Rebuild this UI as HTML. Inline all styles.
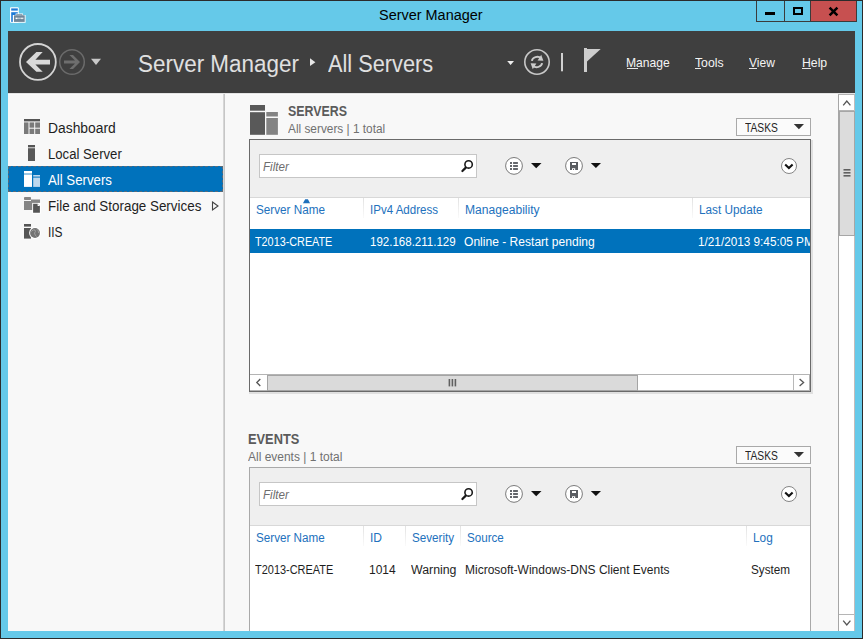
<!DOCTYPE html>
<html><head><meta charset="utf-8">
<style>
*{margin:0;padding:0;box-sizing:border-box}
html,body{width:863px;height:639px;overflow:hidden}
body{background:#65c9e9;font-family:"Liberation Sans",sans-serif;position:relative}
.a{position:absolute}
.t{position:absolute;white-space:nowrap;line-height:1;transform-origin:0 0}
svg{position:absolute;overflow:visible}
</style></head><body>
<!-- outer dark border -->
<div class="a" style="left:0;top:0;width:863px;height:639px;border:1px solid #2b2b2b"></div>

<!-- app icon -->
<svg style="left:0;top:0" width="40" height="30" viewBox="0 0 40 30">
  <rect x="10" y="7.2" width="8.8" height="15.6" rx="1" fill="#fff"/>
  <rect x="11.2" y="8.4" width="6.6" height="2.2" fill="#1e7ad6"/>
  <rect x="11.2" y="12.2" width="6.6" height="9.7" fill="#1e7ad6"/>
  <path d="M12.8,15 L15.6,15 L15.6,13.4 L23,13.4 L23,15 L25.6,15 L25.6,22.8 L12.8,22.8 Z" fill="#fff"/>
  <rect x="14" y="15.3" width="10.7" height="6.6" fill="#70879a"/>
  <path d="M16.2,15.6 L16.2,14.3 L22.4,14.3 L22.4,15.6 L21.3,15.6 L21.3,15.2 L17.3,15.2 L17.3,15.6 Z" fill="#70879a"/>
  <rect x="15.2" y="17.8" width="8.4" height="0.7" fill="#fff"/>
  <rect x="16" y="17.8" width="1.2" height="1.3" fill="#fff"/>
  <rect x="21.4" y="17.8" width="1.2" height="1.3" fill="#fff"/>
</svg>

<!-- window buttons -->
<div class="a" style="left:756px;top:1px;width:101px;height:21px;border:1px solid #3b3b3b;border-top:none"></div>
<div class="a" style="left:784px;top:1px;width:1px;height:20px;background:#3b3b3b"></div>
<div class="a" style="left:810px;top:1px;width:46px;height:20px;background:#c75050;border-left:1px solid #3b3b3b"></div>
<div class="a" style="left:765px;top:12px;width:10px;height:3px;background:#000"></div>
<div class="a" style="left:793px;top:7px;width:10px;height:8px;border:2px solid #000"></div>
<svg style="left:828px;top:7px" width="11" height="9" viewBox="0 0 11 9">
  <path d="M1.6 0.6 L9.4 8.4 M9.4 0.6 L1.6 8.4" stroke="#000" stroke-width="2.5"/>
</svg>

<!-- client -->
<div class="a" style="left:8px;top:31px;width:847px;height:600px;background:#f8f8f8"></div>

<!-- header -->
<div class="a" style="left:8px;top:31px;width:847px;height:62px;background:#3f3f3f"></div>
<svg style="left:0;top:0" width="110" height="93" viewBox="0 0 110 93">
  <circle cx="37.9" cy="61.9" r="17.9" fill="none" stroke="#d4d4d4" stroke-width="1.8"/>
  <path d="M26,62 L36.4,52 L42.7,52 L35.4,59.8 L50,59.8 L50,64.4 L35.4,64.4 L42.7,71.8 L36.4,71.8 Z" fill="#d9d9d9"/>
  <circle cx="72" cy="62" r="12.3" fill="none" stroke="#6b6b6b" stroke-width="1.5"/>
  <path d="M80,62 L73,55 L69.4,55 L75,60.6 L64,60.6 L64,63.4 L75,63.4 L69.4,69 L73,69 Z" fill="#6e6e6e"/>
  <path d="M91,58.8 L101,58.8 L96,65 Z" fill="#c8c8c8"/>
</svg>
<svg style="left:0;top:0" width="320" height="93" viewBox="0 0 320 93">
  <path d="M310,58.3 L315.4,62.2 L310,66.1 Z" fill="#e6e6e6"/>
</svg>
<svg style="left:0;top:0" width="610" height="93" viewBox="0 0 610 93">
  <path d="M507.2,61 L514,61 L510.6,65 Z" fill="#eeeeee"/>
  <circle cx="537" cy="62" r="12.2" fill="none" stroke="#c8c8c8" stroke-width="1.6"/>
  <path d="M531.9,60.8 A5.4,4.4 0 0 1 541.2,58.2" fill="none" stroke="#cbcbcb" stroke-width="1.9"/>
  <path d="M542.1,63.2 A5.4,4.4 0 0 1 532.8,65.8" fill="none" stroke="#cbcbcb" stroke-width="1.9"/>
  <path d="M541.2,54.8 L543.4,60.8 L537.6,60.4 Z" fill="#cbcbcb"/>
  <path d="M532.8,69.2 L530.6,63.2 L536.4,63.6 Z" fill="#cbcbcb"/>
  <rect x="561" y="53" width="2" height="18.3" fill="#d0d0d0"/>
  <rect x="584" y="48" width="3" height="24" fill="#cdcdcd"/>
  <path d="M587,49 L600.7,49 L587,61.5 Z" fill="#cdcdcd"/>
</svg>
<div class="a" style="left:627px;top:68px;width:11px;height:1px;background:#e8e8e8"></div>
<div class="a" style="left:695px;top:68px;width:6px;height:1px;background:#e8e8e8"></div>
<div class="a" style="left:749px;top:68px;width:8px;height:1px;background:#e8e8e8"></div>
<div class="a" style="left:802px;top:68px;width:9px;height:1px;background:#e8e8e8"></div>

<!-- light line under header -->
<div class="a" style="left:8px;top:93px;width:847px;height:1px;background:#e4e4e4"></div>
<div class="a" style="left:8px;top:94px;width:830px;height:1px;background:#fbfbfb"></div>

<!-- sidebar -->
<div class="a" style="left:223px;top:94px;width:1px;height:537px;background:#d6d6d6"></div>
<div class="a" style="left:224px;top:94px;width:1px;height:537px;background:#c6c6c6"></div>
<div class="a" style="left:8px;top:166px;width:215px;height:26px;background:#0072bc;border:1px dashed #5a6a78"></div>

<svg style="left:0;top:0" width="230" height="250" viewBox="0 0 230 250">
  <!-- dashboard -->
  <rect x="24" y="119" width="16" height="2.4" fill="#555"/>
  <rect x="24" y="122.4" width="4.5" height="11.6" fill="#7a7a7a"/>
  <rect x="29.5" y="122.4" width="4.7" height="5.3" fill="#7a7a7a"/>
  <rect x="35.2" y="122.4" width="4.8" height="5.3" fill="#7a7a7a"/>
  <rect x="29.5" y="128.7" width="4.7" height="5.3" fill="#7a7a7a"/>
  <rect x="35.2" y="128.7" width="4.8" height="5.3" fill="#7a7a7a"/>
  <!-- local server -->
  <rect x="28" y="145" width="7" height="2.4" fill="#555"/>
  <rect x="28" y="148.2" width="7" height="12.8" fill="#595959"/>
  <!-- all servers (selected) -->
  <rect x="24" y="171" width="8" height="2.6" fill="#fff"/>
  <rect x="24" y="174.4" width="8" height="12.5" fill="#fff"/>
  <rect x="33.2" y="175" width="6.8" height="1.6" fill="#bcd8ee"/>
  <rect x="33.2" y="177.6" width="6.8" height="9.3" fill="#bcd8ee"/>
  <!-- file and storage -->
  <rect x="24" y="197" width="7" height="3" rx="0.8" fill="#858585"/>
  <path d="M24,201 L31,201 L31,199.4 L40,199.4 L40,210 L24,210 Z" fill="#858585"/>
  <rect x="32.2" y="202.9" width="8.6" height="10.8" fill="#fff"/>
  <path d="M33.1,203.8 L37.6,203.8 L39.9,206.1 L39.9,212.8 L33.1,212.8 Z" fill="#555"/>
  <path d="M37.6,203.8 L39.9,206.1 L37.6,206.1 Z" fill="#fff"/>
  <!-- iis -->
  <rect x="24" y="224" width="7" height="2.6" fill="#555"/>
  <rect x="24" y="228" width="7" height="10.6" fill="#555"/>
  <circle cx="35" cy="233" r="5.9" fill="#fff"/>
  <circle cx="35" cy="233" r="4.9" fill="#737373"/>
  <path d="M31.5,231.5 Q33,229 35,230 Q36,232 34.5,233 Q35,235.5 36.5,236.5 M36.8,229.2 Q38.8,230.5 38.6,233" fill="none" stroke="#a0a0a0" stroke-width="1"/>
  <!-- expand triangle -->
  <path d="M212.5,202 L218,206 L212.5,210 Z" fill="none" stroke="#444" stroke-width="1.1"/>
</svg>

<!-- servers icon -->
<svg style="left:0;top:0" width="290" height="140" viewBox="0 0 290 140">
  <rect x="250" y="105" width="15" height="5.7" fill="#595959"/>
  <rect x="250" y="112.2" width="15" height="22.6" fill="#595959"/>
  <rect x="266.3" y="112" width="11.6" height="4.5" fill="#838383"/>
  <rect x="266.3" y="118" width="11.6" height="16.8" fill="#838383"/>
</svg>

<!-- TASKS buttons -->
<div class="a" style="left:736px;top:118px;width:75px;height:18px;border:1px solid #a9a9a9;background:#fbfbfb"></div>
<svg style="left:0;top:0" width="810" height="140" viewBox="0 0 810 140"><path d="M793.8,124 L804,124 L798.9,129.2 Z" fill="#333"/></svg>
<div class="a" style="left:736px;top:446px;width:75px;height:18px;border:1px solid #a9a9a9;background:#fbfbfb"></div>
<svg style="left:0;top:0" width="810" height="470" viewBox="0 0 810 470"><path d="M793.8,452 L804,452 L798.9,457.2 Z" fill="#333"/></svg>

<!-- SERVERS panel -->
<div class="a" style="left:249px;top:392px;width:564px;height:2px;background:#e0e0e0"></div>
<div class="a" style="left:811px;top:140px;width:2px;height:254px;background:#e0e0e0"></div>
<div class="a" style="left:249px;top:139px;width:562px;height:253px;border:1px solid #6a6a6a;background:#fff"></div>
<div class="a" style="left:250px;top:140px;width:560px;height:57px;background:#efefef"></div>
<div class="a" style="left:250px;top:197px;width:560px;height:1px;background:#d8d8d8"></div>
<div class="a" style="left:259px;top:154px;width:218px;height:24px;border:1px solid #c6c6c6;background:#fff"></div>
<svg style="left:0;top:0" width="810" height="200" viewBox="0 0 810 200">
  <circle cx="468.6" cy="164.4" r="3.7" fill="none" stroke="#1a1a1a" stroke-width="1.6"/>
  <path d="M465.8,167.6 L462.4,171" stroke="#1a1a1a" stroke-width="2.2" stroke-linecap="round"/>
  <circle cx="514" cy="165.9" r="8.4" fill="#fff" stroke="#7a7a7a" stroke-width="1"/>
  <rect x="510" y="162.1" width="2" height="1.8" fill="#54575c"/><rect x="513.1" y="162.1" width="4.8" height="1.8" fill="#54575c"/>
  <rect x="510" y="165.1" width="2" height="1.8" fill="#54575c"/><rect x="513.1" y="165.1" width="4.8" height="1.8" fill="#54575c"/>
  <rect x="510" y="168.1" width="2" height="1.8" fill="#54575c"/><rect x="513.1" y="168.1" width="4.8" height="1.8" fill="#54575c"/>
  <path d="M531,163 L541.5,163 L536.2,168.2 Z" fill="#111"/>
  <circle cx="574" cy="165.9" r="8.4" fill="#fff" stroke="#7a7a7a" stroke-width="1"/>
  <path d="M570,162 H578 V170 H575.2 V168.3 H572 V170 H570 Z M572,163.1 V164.9 H576 V163.1 Z" fill="#5a5d62" fill-rule="evenodd"/>
  <rect x="573" y="169" width="1" height="1" fill="#5a5d62"/>
  <path d="M590.8,163 L601,163 L595.9,168.1 Z" fill="#111"/>
  <circle cx="789" cy="166" r="7.5" fill="#fff" stroke="#858585" stroke-width="1"/>
  <path d="M785.2,164.6 L788.9,168.1 L792.6,164.6" fill="none" stroke="#111" stroke-width="2.1"/>
  <!-- sort arrow -->
  <path d="M302.9,203.2 L305.2,199.2 L307.9,199.2 L310.1,203.2 Z" fill="#1f70bc"/>
</svg>
<!-- column separators -->
<div class="a" style="left:363px;top:198px;width:1px;height:20px;background:linear-gradient(#e2e2e2,#fafafa)"></div>
<div class="a" style="left:458px;top:198px;width:1px;height:20px;background:linear-gradient(#e2e2e2,#fafafa)"></div>
<div class="a" style="left:692px;top:198px;width:1px;height:20px;background:linear-gradient(#e2e2e2,#fafafa)"></div>
<!-- selected row -->
<div class="a" style="left:250px;top:229px;width:560px;height:24px;background:#0072bc"></div>
<!-- h scrollbar -->
<div class="a" style="left:250px;top:374px;width:560px;height:17px;background:#fff;border:1px solid #b4b4b4;border-left:none"></div>
<div class="a" style="left:267px;top:375px;width:371px;height:16px;background:#dadada;border:1px solid #a4a4a4"></div>
<div class="a" style="left:793px;top:375px;width:1px;height:15px;background:#b8b8b8"></div>
<svg style="left:0;top:0" width="810" height="392" viewBox="0 0 810 392">
  <path d="M260.3,379 L256.8,382.5 L260.3,386" fill="none" stroke="#555" stroke-width="1.3"/>
  <path d="M799.6,379 L803.6,382.5 L799.6,386" fill="none" stroke="#555" stroke-width="1.3"/>
  <rect x="448.6" y="379" width="1.6" height="7.4" fill="#606060"/>
  <rect x="451.6" y="379" width="1.6" height="7.4" fill="#606060"/>
  <rect x="454.6" y="379" width="1.6" height="7.4" fill="#606060"/>
</svg>

<!-- EVENTS panel -->
<div class="a" style="left:249px;top:467px;width:562px;height:170px;border:1px solid #a9a9a9;background:#fff"></div>
<div class="a" style="left:250px;top:468px;width:560px;height:57px;background:#efefef"></div>
<div class="a" style="left:250px;top:525px;width:560px;height:1px;background:#d8d8d8"></div>
<div class="a" style="left:259px;top:482px;width:218px;height:24px;border:1px solid #c6c6c6;background:#fff"></div>
<svg style="left:0;top:0" width="810" height="530" viewBox="0 0 810 530"><g transform="translate(0,328)">
  <circle cx="468.6" cy="164.4" r="3.7" fill="none" stroke="#1a1a1a" stroke-width="1.6"/>
  <path d="M465.8,167.6 L462.4,171" stroke="#1a1a1a" stroke-width="2.2" stroke-linecap="round"/>
  <circle cx="514" cy="165.9" r="8.4" fill="#fff" stroke="#7a7a7a" stroke-width="1"/>
  <rect x="510" y="162.1" width="2" height="1.8" fill="#54575c"/><rect x="513.1" y="162.1" width="4.8" height="1.8" fill="#54575c"/>
  <rect x="510" y="165.1" width="2" height="1.8" fill="#54575c"/><rect x="513.1" y="165.1" width="4.8" height="1.8" fill="#54575c"/>
  <rect x="510" y="168.1" width="2" height="1.8" fill="#54575c"/><rect x="513.1" y="168.1" width="4.8" height="1.8" fill="#54575c"/>
  <path d="M531,163 L541.5,163 L536.2,168.2 Z" fill="#111"/>
  <circle cx="574" cy="165.9" r="8.4" fill="#fff" stroke="#7a7a7a" stroke-width="1"/>
  <path d="M570,162 H578 V170 H575.2 V168.3 H572 V170 H570 Z M572,163.1 V164.9 H576 V163.1 Z" fill="#5a5d62" fill-rule="evenodd"/>
  <rect x="573" y="169" width="1" height="1" fill="#5a5d62"/>
  <path d="M590.8,163 L601,163 L595.9,168.1 Z" fill="#111"/>
  <circle cx="789" cy="166" r="7.5" fill="#fff" stroke="#858585" stroke-width="1"/>
  <path d="M785.2,164.6 L788.9,168.1 L792.6,164.6" fill="none" stroke="#111" stroke-width="2.1"/>
</g></svg>
<div class="a" style="left:363px;top:526px;width:1px;height:20px;background:linear-gradient(#e2e2e2,#fafafa)"></div>
<div class="a" style="left:405px;top:526px;width:1px;height:20px;background:linear-gradient(#e2e2e2,#fafafa)"></div>
<div class="a" style="left:460px;top:526px;width:1px;height:20px;background:linear-gradient(#e2e2e2,#fafafa)"></div>
<div class="a" style="left:746px;top:526px;width:1px;height:20px;background:linear-gradient(#e2e2e2,#fafafa)"></div>

<!-- vertical scrollbar -->
<div class="a" style="left:838px;top:94px;width:17px;height:537px;background:#fff;border-left:1px solid #a6a6a6;border-right:1px solid #c2bcbc;border-top:1px solid #b4b4b4"></div>
<div class="a" style="left:839px;top:110px;width:15px;height:1px;background:#b5b5b5"></div>
<div class="a" style="left:839px;top:111px;width:16px;height:125px;background:#dcdcdc;border:1px solid #a6a6a6"></div>
<div class="a" style="left:839px;top:614px;width:15px;height:1px;background:#b5b5b5"></div>
<svg style="left:0;top:0" width="855" height="631" viewBox="0 0 855 631">
  <path d="M843.2,105.4 L846.8,101 L850.4,105.4" fill="none" stroke="#555" stroke-width="1.3"/>
  <path d="M843.2,620.6 L846.8,625 L850.4,620.6" fill="none" stroke="#555" stroke-width="1.3"/>
  <rect x="843.5" y="169" width="7" height="1.6" fill="#606060"/>
  <rect x="843.5" y="172" width="7" height="1.6" fill="#606060"/>
  <rect x="843.5" y="175" width="7" height="1.6" fill="#606060"/>
</svg>

<!-- bottom frame over panels -->
<div class="a" style="left:8px;top:631px;width:847px;height:7px;background:#65c9e9"></div>
<div class="a" style="left:0;top:638px;width:863px;height:1px;background:#2b2b2b"></div>

<div class="t" style="left:378.79px;top:8px;font-size:14.25px;color:#000;transform:scaleX(1.0139);">Server Manager</div>
<div class="t" style="left:138.04px;top:53px;font-size:23.5px;color:#e0e0e0;transform:scaleX(0.9551);">Server Manager</div>
<div class="t" style="left:327.60px;top:53px;font-size:23.5px;color:#e0e0e0;transform:scaleX(0.9257);">All Servers</div>
<div class="t" style="left:626.25px;top:57px;font-size:12.75px;color:#f4f4f4;transform:scaleX(0.9511);">Manage</div>
<div class="t" style="left:695.10px;top:57px;font-size:12.75px;color:#f4f4f4;transform:scaleX(0.9586);">Tools</div>
<div class="t" style="left:749.30px;top:57px;font-size:12.75px;color:#f4f4f4;transform:scaleX(0.9444);">View</div>
<div class="t" style="left:801.94px;top:57px;font-size:12.75px;color:#f4f4f4;transform:scaleX(0.9600);">Help</div>
<div class="t" style="left:47.61px;top:121px;font-size:14px;color:#1e1e1e;transform:scaleX(0.9896);">Dashboard</div>
<div class="t" style="left:47.86px;top:147px;font-size:14px;color:#1e1e1e;transform:scaleX(0.9385);">Local Server</div>
<div class="t" style="left:47.90px;top:173px;font-size:14px;color:#ffffff;transform:scaleX(0.9448);">All Servers</div>
<div class="t" style="left:47.84px;top:199px;font-size:14px;color:#1e1e1e;transform:scaleX(0.9566);">File and Storage Services</div>
<div class="t" style="left:47.95px;top:225px;font-size:14px;color:#1e1e1e;transform:scaleX(0.8500);">IIS</div>
<div class="t" style="left:287.91px;top:104px;font-size:14px;font-weight:bold;color:#5b5b5b;transform:scaleX(0.8862);">SERVERS</div>
<div class="t" style="left:288.00px;top:123px;font-size:12.5px;color:#707070;transform:scaleX(0.9471);">All servers | 1 total</div>
<div class="t" style="left:745.10px;top:122px;font-size:12.5px;color:#262626;transform:scaleX(0.8225);">TASKS</div>
<div class="t" style="left:263.20px;top:161px;font-size:12.5px;font-style:italic;color:#6d6d6d;transform:scaleX(0.9321);">Filter</div>
<div class="t" style="left:255.96px;top:204px;font-size:12.5px;color:#2271bd;transform:scaleX(0.9375);">Server Name</div>
<div class="t" style="left:369.58px;top:204px;font-size:12.5px;color:#2271bd;transform:scaleX(0.9236);">IPv4 Address</div>
<div class="t" style="left:465.03px;top:204px;font-size:12.5px;color:#2271bd;transform:scaleX(0.9671);">Manageability</div>
<div class="t" style="left:698.66px;top:204px;font-size:12.5px;color:#2271bd;transform:scaleX(0.9424);">Last Update</div>
<div class="t" style="left:255.00px;top:236px;font-size:12.5px;color:#ffffff;transform:scaleX(0.8652);">T2013-CREATE</div>
<div class="t" style="left:369.58px;top:236px;font-size:12.5px;color:#ffffff;transform:scaleX(0.9220);">192.168.211.129</div>
<div class="t" style="left:463.74px;top:236px;font-size:12.5px;color:#ffffff;transform:scaleX(0.9649);">Online - Restart pending</div>
<div class="a" style="left:250.0px;top:229.0px;width:560.0px;height:24.0px;overflow:hidden"><div class="t" style="left:448.26px;top:7px;font-size:12.5px;color:#ffffff;transform:scaleX(0.9405);">1/21/2013 9:45:05 PM</div></div>
<div class="t" style="left:247.78px;top:432px;font-size:14px;font-weight:bold;color:#5b5b5b;transform:scaleX(0.9164);">EVENTS</div>
<div class="t" style="left:248.20px;top:451px;font-size:12.5px;color:#707070;transform:scaleX(0.9582);">All events | 1 total</div>
<div class="t" style="left:745.10px;top:450px;font-size:12.5px;color:#262626;transform:scaleX(0.8225);">TASKS</div>
<div class="t" style="left:263.20px;top:489px;font-size:12.5px;font-style:italic;color:#6d6d6d;transform:scaleX(0.9321);">Filter</div>
<div class="t" style="left:255.67px;top:532px;font-size:12.5px;color:#2271bd;transform:scaleX(0.9333);">Server Name</div>
<div class="t" style="left:370.04px;top:532px;font-size:12.5px;color:#2271bd;transform:scaleX(0.9636);">ID</div>
<div class="t" style="left:411.57px;top:532px;font-size:12.5px;color:#2271bd;transform:scaleX(0.9341);">Severity</div>
<div class="t" style="left:467.07px;top:532px;font-size:12.5px;color:#2271bd;transform:scaleX(0.9289);">Source</div>
<div class="t" style="left:753.05px;top:532px;font-size:12.5px;color:#2271bd;transform:scaleX(0.9474);">Log</div>
<div class="t" style="left:254.70px;top:564px;font-size:12.5px;color:#1e1e1e;transform:scaleX(0.8764);">T2013-CREATE</div>
<div class="t" style="left:368.54px;top:564px;font-size:12.5px;color:#1e1e1e;transform:scaleX(0.9615);">1014</div>
<div class="t" style="left:411.40px;top:564px;font-size:12.5px;color:#1e1e1e;transform:scaleX(0.9867);">Warning</div>
<div class="t" style="left:465.24px;top:564px;font-size:12.5px;color:#1e1e1e;transform:scaleX(0.9590);">Microsoft-Windows-DNS Client Events</div>
<div class="t" style="left:750.86px;top:564px;font-size:12.5px;color:#1e1e1e;transform:scaleX(0.9375);">System</div>
</body></html>
